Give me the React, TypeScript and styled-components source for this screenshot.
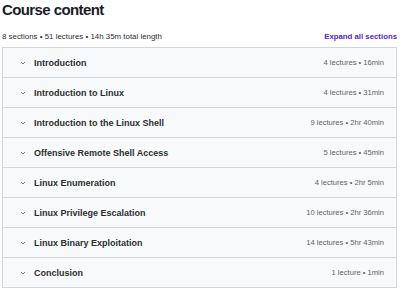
import { createGlobalStyle } from 'styled-components';
import styled from 'styled-components';

const GlobalStyle = createGlobalStyle`
  body {
    margin: 0;
    background: #fff;
    font-family: "Liberation Sans", Arial, sans-serif;
    color: #2d2f31;
  }
`;

const Container = styled.div`
  width: 400px;
  height: 290px;
  padding: 0 3px 0 2px;
  box-sizing: border-box;
  overflow: hidden;
`;

const Heading = styled.h2`
  margin: 0;
  padding-top: 1px;
  font-size: 15px;
  line-height: 17px;
  font-weight: 700;
  letter-spacing: -0.6px;
  color: #1c1d1f;
`;

const SubBar = styled.div`
  display: flex;
  justify-content: space-between;
  align-items: center;
  margin-top: 12px;
  height: 12px;
  margin-bottom: 5px;
`;

const Stats = styled.span`
  font-size: 7.9px;
  color: #2d2f31;
`;

const ExpandLink = styled.button`
  border: 0;
  background: none;
  padding: 0;
  font-family: inherit;
  font-size: 7.8px;
  font-weight: 700;
  color: #5624d0;
  cursor: pointer;
`;

const Panel = styled.div`
  border: 1px solid #d1d7dc;
  border-bottom: 0;
`;

const Row = styled.div`
  display: flex;
  align-items: center;
  height: 29px;
  padding: 0 12px 0 17px;
  background: #f7f9fa;
  border-bottom: 1px solid #d1d7dc;
`;

const Chevron = styled.svg`
  width: 6px;
  height: 6px;
  margin-right: 8px;
  flex-shrink: 0;
`;

const SectionTitle = styled.span`
  flex: 1;
  font-size: 9px;
  font-weight: 700;
  color: #2d2f31;
`;

const Meta = styled.span`
  font-size: 7.6px;
  color: #5f6468;
`;

const sections = [
  { title: 'Introduction', meta: '4 lectures • 16min' },
  { title: 'Introduction to Linux', meta: '4 lectures • 31min' },
  { title: 'Introduction to the Linux Shell', meta: '9 lectures • 2hr 40min' },
  { title: 'Offensive Remote Shell Access', meta: '5 lectures • 45min' },
  { title: 'Linux Enumeration', meta: '4 lectures • 2hr 5min' },
  { title: 'Linux Privilege Escalation', meta: '10 lectures • 2hr 36min' },
  { title: 'Linux Binary Exploitation', meta: '14 lectures • 5hr 43min' },
  { title: 'Conclusion', meta: '1 lecture • 1min' },
];

export default function App() {
  return (
    <Container>
      <GlobalStyle />
      <Heading>Course content</Heading>
      <SubBar>
        <Stats>8 sections • 51 lectures • 14h 35m total length</Stats>
        <ExpandLink>Expand all sections</ExpandLink>
      </SubBar>
      <Panel>
        {sections.map((s) => (
          <Row key={s.title}>
            <Chevron viewBox="0 0 6 6">
              <path d="M1 2 L3 4 L5 2" fill="none" stroke="#6a6f73" strokeWidth="0.9" />
            </Chevron>
            <SectionTitle>{s.title}</SectionTitle>
            <Meta>{s.meta}</Meta>
          </Row>
        ))}
      </Panel>
    </Container>
  );
}
